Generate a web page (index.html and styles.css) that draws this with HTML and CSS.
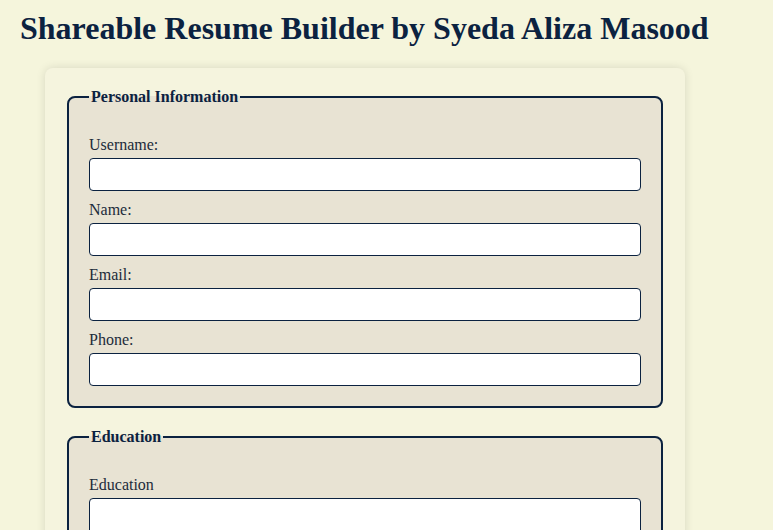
FILE: index.html
```html
<!DOCTYPE html>
<html lang="en">
<head>
<meta charset="utf-8">
<title>Shareable Resume Builder</title>
<link rel="stylesheet" href="styles.css">
</head>
<body>
<h1 class="title">Shareable Resume Builder by Syeda Aliza Masood</h1>
<div class="card">
  <form class="resume-form">
    <fieldset class="section">
      <legend class="section-title">Personal Information</legend>
      <label class="field-label" for="username">Username:</label>
      <input class="field-input" type="text" id="username">
      <label class="field-label" for="name">Name:</label>
      <input class="field-input" type="text" id="name">
      <label class="field-label" for="email">Email:</label>
      <input class="field-input" type="email" id="email">
      <label class="field-label" for="phone">Phone:</label>
      <input class="field-input" type="tel" id="phone">
    </fieldset>
    <fieldset class="section">
      <legend class="section-title">Education</legend>
      <label class="field-label" for="education">Education</label>
      <textarea class="field-input field-area" id="education"></textarea>
    </fieldset>
  </form>
</div>
</body>
</html>
```
FILE: styles.css
```css
html, body {
  margin: 0;
  padding: 0;
  background: #f5f5dc;
  font-family: "Liberation Serif", "Times New Roman", serif;
  color: #1c2b3a;
}

.title {
  margin: 10px 0 20.5px 20px;
  font-family: "Liberation Serif", "Times New Roman", serif;
  font-size: 32px;
  font-weight: bold;
  color: #0b2240;
}

.card {
  width: 600px;
  margin-left: 45px;
  padding: 20px;
  background: #f5f4de;
  border-radius: 8px;
  box-shadow: 0 0 10px rgba(0, 0, 0, 0.12);
}

.resume-form {
  margin: 0;
}

.section {
  margin: 0 2px 20px;
  padding: 20px;
  border: 2px solid #0b2240;
  border-radius: 8px;
  background: #e8e3d3;
}

.section-title {
  padding: 0 2px;
  font-family: "Liberation Serif", "Times New Roman", serif;
  font-size: 16px;
  font-weight: bold;
  color: #0b2240;
}

.field-label {
  display: block;
  margin: 10px 0 4px;
  font-family: "Liberation Serif", "Times New Roman", serif;
  font-size: 16px;
  color: #1c2b3a;
}

.field-input {
  display: block;
  box-sizing: border-box;
  width: 100%;
  height: 33px;
  margin: 0;
  padding: 6px;
  border: 1px solid #0b2240;
  border-radius: 4px;
  background: #fff;
  font-family: inherit;
  font-size: 14px;
}

.field-area {
  height: 100px;
  resize: vertical;
}
```
